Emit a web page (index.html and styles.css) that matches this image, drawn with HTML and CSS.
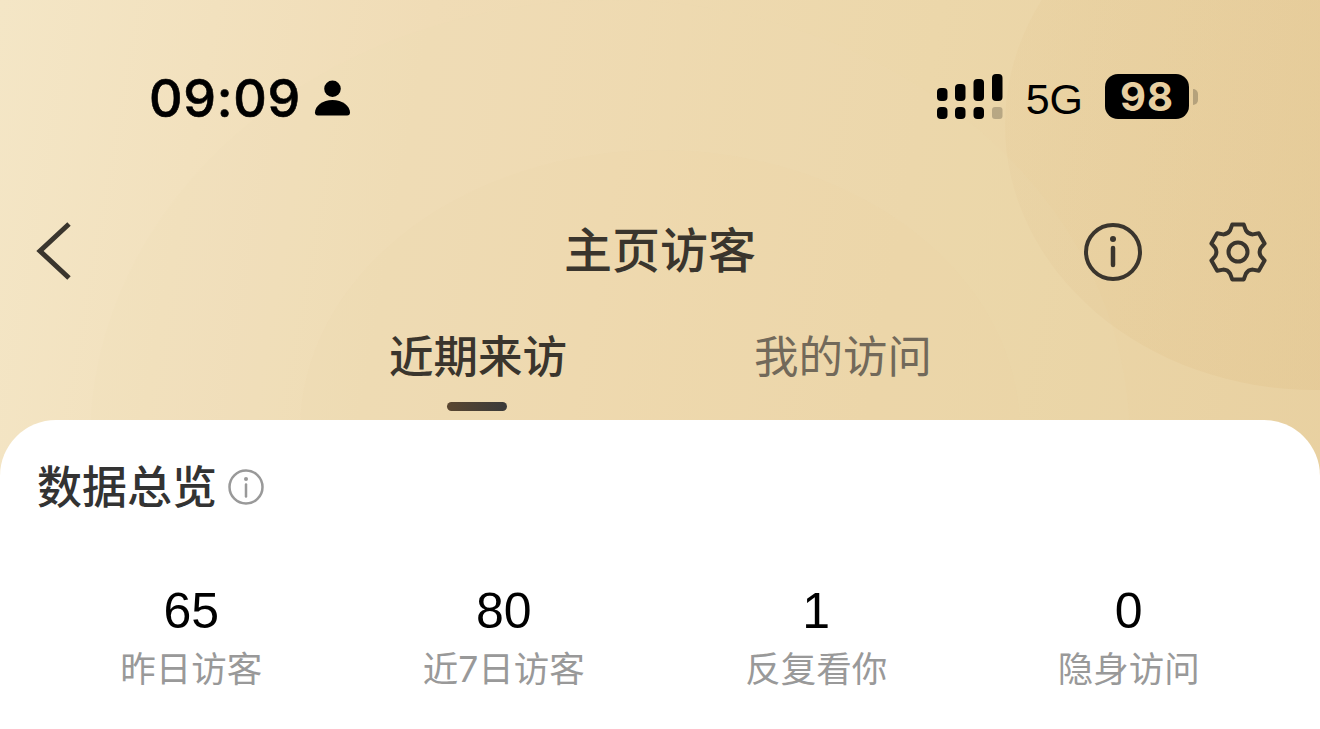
FILE: index.html
```html
<!DOCTYPE html>
<html lang="zh-CN">
<head>
    <meta charset="UTF-8">
    <meta name="viewport" content="width=device-width, initial-scale=1.0">
    <title>主页访客</title>
    <link rel="stylesheet" href="styles.css">
</head>
<body>
    <div class="screen">
        <!-- background swirls -->
        <div class="swirl swirl-one"></div>
        <div class="swirl swirl-two"></div>
        <div class="swirl swirl-three"></div>

        <div class="status-bar">
            <div class="status-left">
                <span class="clock">09:09</span>
                <svg class="person" width="37" height="38" viewBox="0 0 38 38">
                    <circle cx="19" cy="9.500" r="8.500" fill="#000"/>
                    <path d="M1 34c0-7 8-13 18-13s18 6 18 13c0 2-1 3-3 3H4c-2 0-3-1-3-3z" fill="#000"/>
                </svg>
            </div>
            <div class="status-right">
                <svg class="signal" width="66" height="46" viewBox="0 0 66 46">
                    <rect x="0" y="14" width="10.500" height="13" rx="4" fill="#000"/>
                    <rect x="18" y="10" width="10.500" height="17" rx="4" fill="#000"/>
                    <rect x="36.500" y="5" width="10.500" height="22" rx="4" fill="#000"/>
                    <rect x="55" y="0" width="10.500" height="27" rx="4" fill="#000"/>
                    <rect x="0" y="33" width="10.500" height="12" rx="4" fill="#000"/>
                    <rect x="18" y="33" width="10.500" height="12" rx="4" fill="#000"/>
                    <rect x="36.500" y="33" width="10.500" height="12" rx="4" fill="#000"/>
                    <rect x="55" y="33" width="10.500" height="12" rx="3" fill="#000" opacity="0.22"/>
                </svg>
                <span class="network">5G</span>
                <div class="battery">
                    <span class="battery-level">98</span>
                    <span class="battery-cap"></span>
                </div>
            </div>
        </div>

        <div class="nav-bar">
            <svg class="nav-back" width="36" height="60" viewBox="0 0 36 60">
                <path d="M33 3 L4 30 L33 57" fill="none" stroke="#3a352d" stroke-width="5"/>
            </svg>
            <h1 class="nav-title">主页访客</h1>
            <div class="nav-actions">
                <svg width="60" height="60" viewBox="0 0 60 60">
                    <circle cx="30" cy="30" r="27" fill="none" stroke="#3a352d" stroke-width="4"/>
                    <circle cx="30" cy="17" r="3" fill="#3a352d"/>
                    <path d="M30 26v17" stroke="#3a352d" stroke-width="4.500" stroke-linecap="round"/>
                </svg>
                <svg width="60" height="60" viewBox="0 0 60 60">
                    <path d="M24.200 2.600H35.800L37.900 8.400Q40.200 12.200 44.800 12.400L50.800 11.300L56.600 21.400L52.700 26Q50.500 30 52.700 34L56.600 38.600L50.800 48.700L44.800 47.600Q40.200 47.800 37.900 51.600L35.800 57.400H24.200L22.100 51.600Q19.800 47.800 15.200 47.600L9.200 48.700L3.400 38.600L7.300 34Q9.500 30 7.300 26L3.400 21.400L9.200 11.300L15.200 12.400Q19.800 12.200 22.100 8.400Z" fill="none" stroke="#3a352d" stroke-width="4" stroke-linejoin="round"/>
                    <circle cx="30" cy="30" r="9.500" fill="none" stroke="#3a352d" stroke-width="4"/>
                </svg>
            </div>
        </div>

        <div class="tabs">
            <div class="tab tab-active">近期来访</div>
            <div class="tab">我的访问</div>
        </div>

        <div class="card">
            <div class="card-head">
                <h2 class="card-title">数据总览</h2>
                <svg class="card-info" width="36" height="36" viewBox="0 0 36 36">
                    <circle cx="18" cy="18" r="16.500" fill="none" stroke="#999" stroke-width="2.500"/>
                    <circle cx="18" cy="10" r="2" fill="#999"/>
                    <path d="M18 15.500v12" stroke="#999" stroke-width="2.500" stroke-linecap="round"/>
                </svg>
            </div>
            <div class="stats">
                <div class="stat">
                    <div class="stat-num">65</div>
                    <div class="stat-label">昨日访客</div>
                </div>
                <div class="stat">
                    <div class="stat-num">80</div>
                    <div class="stat-label">近7日访客</div>
                </div>
                <div class="stat">
                    <div class="stat-num">1</div>
                    <div class="stat-label">反复看你</div>
                </div>
                <div class="stat">
                    <div class="stat-num">0</div>
                    <div class="stat-label">隐身访问</div>
                </div>
            </div>
        </div>
    </div>
</body>
</html>
```
FILE: styles.css
```css
html, body {
    margin: 0;
    padding: 0;
}

body {
    font-family: Inter, "Noto Sans CJK SC", sans-serif;
    background-color: #fff;
}

.screen {
    position: relative;
    width: 1320px;
    height: 729px;
    overflow: hidden;
    background: linear-gradient(100deg, #f4e6c6 0%, #f0dcb6 30%, #ecd7aa 65%, #e8d0a0 100%);
}

/* soft curved shapes in the header */
.swirl {
    position: absolute;
    border-radius: 50%;
}

.swirl-one {
    left: 1005px;
    top: -140px;
    width: 620px;
    height: 530px;
    background: linear-gradient(100deg, rgba(224, 192, 136, 0.1), rgba(224, 192, 136, 0.5));
}

.swirl-two {
    left: 90px;
    top: 0;
    width: 1040px;
    height: 880px;
    background-color: rgba(240, 222, 180, 0.12);
}

.swirl-three {
    left: 300px;
    top: 150px;
    width: 720px;
    height: 560px;
    background-color: rgba(232, 208, 160, 0.06);
}

.status-bar {
    position: relative;
    height: 196px;
    display: flex;
    justify-content: space-between;
    padding: 72px 122px 0 149px;
    box-sizing: border-box;
}

.status-left {
    display: flex;
    align-items: center;
    gap: 13px;
    height: 52px;
}

.clock {
    font-size: 52px;
    font-weight: 500;
    color: #000;
    letter-spacing: 0.7px;
    -webkit-text-stroke: 0.6px #000;
}

.status-right {
    display: flex;
    align-items: flex-start;
}

.signal {
    margin-top: 2px;
}

.network {
    font-family: "Liberation Sans", sans-serif;
    font-size: 43px;
    line-height: 52px;
    color: #000;
    margin: 1px 0 0 23px;
}

.battery {
    display: flex;
    align-items: center;
    margin: 2px 0 0 22px;
}

.battery-level {
    width: 84px;
    height: 45px;
    background-color: #000;
    border-radius: 13px;
    color: #e8cfa0;
    font-size: 40px;
    font-weight: 700;
    line-height: 46px;
    text-align: center;
    letter-spacing: 1px;
}

.battery-cap {
    width: 5px;
    height: 16px;
    margin-left: 4px;
    background-color: #b5a27c;
    border-radius: 0 8px 8px 0;
}

.nav-bar {
    position: relative;
    height: 110px;
    display: flex;
    align-items: center;
    justify-content: space-between;
    padding: 0 52px 0 36px;
}

.nav-title {
    position: absolute;
    left: 0;
    right: 0;
    margin: 0;
    padding-bottom: 8px;
    text-align: center;
    font-size: 48px;
    font-weight: 500;
    color: #3a352d;
}

.nav-actions {
    display: flex;
    gap: 65px;
    margin-top: 2px;
}

.tabs {
    position: relative;
    height: 114px;
    display: flex;
    justify-content: center;
    gap: 187px;
    padding-left: 1px;
}

.tab {
    position: relative;
    font-size: 44.500px;
    line-height: 102px;
    color: #72695a;
    height: 105px;
}

.tab-active {
    color: #3a352d;
    font-weight: 500;
}

.tab-active::after {
    content: "";
    position: absolute;
    left: 58px;
    bottom: 0;
    width: 60px;
    height: 9px;
    border-radius: 5px;
    background: linear-gradient(90deg, #5a4630, #3a3a3a);
}

.card {
    position: relative;
    height: 310px;
    background-color: #fff;
    border-radius: 56px 56px 0 0;
    padding: 38px 37px 0;
}

.card-head {
    display: flex;
    align-items: center;
    gap: 11px;
    height: 56px;
}

.card-title {
    margin: 0;
    padding-bottom: 4px;
    font-size: 45px;
    font-weight: 500;
    color: #333;
}

.card-info {
    margin-top: 2px;
}

.stats {
    display: grid;
    grid-template-columns: repeat(4, 312.500px);
    margin: 69px 0 0 -2px;
}

.stat {
    text-align: center;
}

.stat-num {
    font-family: "Liberation Sans", sans-serif;
    font-size: 50px;
    line-height: 56px;
    color: #000;
}

.stat-label {
    font-size: 35.500px;
    line-height: 62px;
    color: #999;
}
```
